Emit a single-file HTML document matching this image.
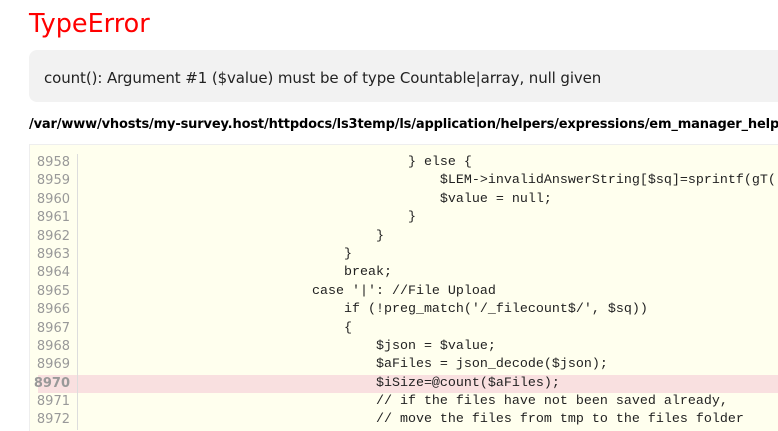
<!DOCTYPE html>
<html><head><meta charset="utf-8"><style>
html,body{margin:0;padding:0;width:778px;height:431px;overflow:hidden;background:#fff;position:relative;}
body{font-family:"DejaVu Sans","Liberation Sans",sans-serif;color:#000;}
h1{position:absolute;left:29px;top:9px;margin:0;font-weight:normal;font-size:25.5px;color:#f00;font-family:"DejaVu Sans",sans-serif;}
.msg{position:absolute;left:29px;top:50px;width:749px;height:52px;background:#f2f2f2;border-radius:8px 0 0 8px;overflow:hidden;}
.msg p{margin:0;position:absolute;left:15px;top:19px;font-size:15px;color:#222;white-space:nowrap;font-family:"DejaVu Sans",sans-serif;letter-spacing:-0.1px;}
.path{position:absolute;left:29px;top:117px;width:749px;overflow:hidden;font-size:13px;font-weight:bold;white-space:nowrap;font-family:"DejaVu Sans",sans-serif;letter-spacing:-0.15px;}
.code{position:absolute;left:29px;top:144px;width:748px;height:300px;background:#ffffee;border:1px solid #eee;border-right:0;overflow:hidden;}
.lines{position:absolute;left:0;top:9px;width:748px;}
.l{position:relative;height:18.4px;line-height:18.4px;font-family:"Liberation Mono",monospace;font-size:13.33px;white-space:pre;}
.l.hl{background:#f9e0e0;margin-left:8px;}
.n{position:absolute;left:0;width:40px;text-align:right;color:#999;border-right:1px solid #ddd;padding-right:7px;font-family:"DejaVu Sans",sans-serif;font-size:13px;}
.hl .n{left:-8px;font-weight:bold;}
.t{position:absolute;left:122px;color:#222;}
.hl .t{left:114px;}
</style></head><body>
<h1>TypeError</h1>
<div class="msg"><p>count(): Argument #1 ($value) must be of type Countable|array, null given</p></div>
<div class="path">/var/www/vhosts/my-survey.host/httpdocs/ls3temp/ls/application/helpers/expressions/em_manager_helper.php(8970)</div>
<div class="code"><div class="lines">
<div class="l"><span class="n">8958</span><span class="t">                                } else {</span></div>
<div class="l"><span class="n">8959</span><span class="t">                                    $LEM-&gt;invalidAnswerString[$sq]=sprintf(gT(</span></div>
<div class="l"><span class="n">8960</span><span class="t">                                    $value = null;</span></div>
<div class="l"><span class="n">8961</span><span class="t">                                }</span></div>
<div class="l"><span class="n">8962</span><span class="t">                            }</span></div>
<div class="l"><span class="n">8963</span><span class="t">                        }</span></div>
<div class="l"><span class="n">8964</span><span class="t">                        break;</span></div>
<div class="l"><span class="n">8965</span><span class="t">                    case '|': //File Upload</span></div>
<div class="l"><span class="n">8966</span><span class="t">                        if (!preg_match('/_filecount$/', $sq))</span></div>
<div class="l"><span class="n">8967</span><span class="t">                        {</span></div>
<div class="l"><span class="n">8968</span><span class="t">                            $json = $value;</span></div>
<div class="l"><span class="n">8969</span><span class="t">                            $aFiles = json_decode($json);</span></div>
<div class="l hl"><span class="n">8970</span><span class="t">                            $iSize=@count($aFiles);</span></div>
<div class="l"><span class="n">8971</span><span class="t">                            // if the files have not been saved already,</span></div>
<div class="l"><span class="n">8972</span><span class="t">                            // move the files from tmp to the files folder</span></div>
</div></div>
</body></html>
